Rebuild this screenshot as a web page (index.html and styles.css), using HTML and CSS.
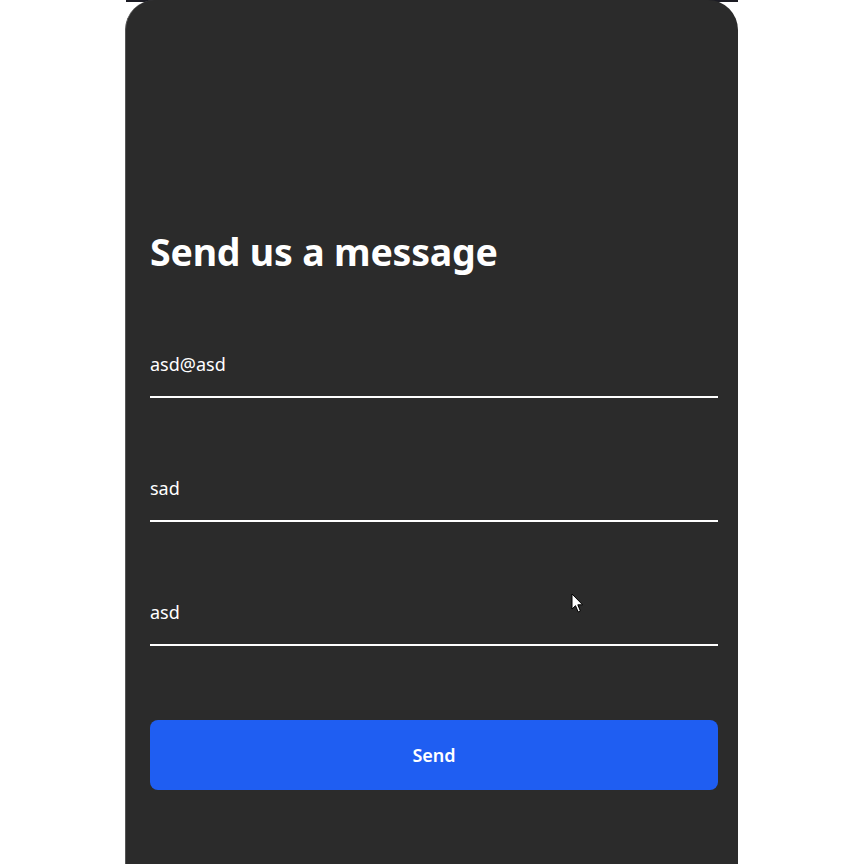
FILE: index.html
```html
<!DOCTYPE html>
<html lang="en">
<head>
<meta charset="utf-8">
<title>Contact</title>
<link rel="stylesheet" href="styles.css">
</head>
<body>
<div class="topbar"></div>
<main class="card">
  <h1 class="title">Send us a message</h1>
  <form class="form">
    <input class="field" type="email" value="asd@asd">
    <input class="field" type="text" value="sad">
    <input class="field" type="text" value="asd">
    <button class="send" type="button">Send</button>
  </form>
</main>
<svg class="cursor" width="14" height="22" viewBox="0 0 14 22">
  <path d="M1 1 L1 16 L4.5 12.7 L7.2 19 L9.4 18 L6.8 11.8 L11.6 11.8 Z" fill="#fff" stroke="#000" stroke-width="1"/>
</svg>
</body>
</html>
```
FILE: styles.css
```css
* { box-sizing: border-box; }
html, body { margin: 0; padding: 0; }
body {
  background: #ffffff;
  font-family: "Noto Sans", "Open Sans", sans-serif;
  height: 864px;
  overflow: hidden;
  position: relative;
}
.topbar {
  position: absolute;
  top: 0;
  left: 126px;
  width: 612px;
  height: 2px;
  background: #1c1c24;
}
.card {
  position: relative;
  width: 613px;
  height: 864px;
  margin-left: 125px;
  background: #2b2b2b;
  border-radius: 30px 30px 0 0;
  border-left: 1px solid #555;
  padding: 230px 20px 0 24px;
}
.title {
  margin: 0;
  color: #ffffff;
  font-size: 37.5px;
  line-height: 44px;
  font-weight: 700;
  letter-spacing: -0.2px;
}
.form {
  display: flex;
  flex-direction: column;
  margin-top: 76px;
}
.field {
  display: block;
  width: 100%;
  background: transparent;
  border: none;
  border-bottom: 2px solid #ffffff;
  color: #ffffff;
  font-family: inherit;
  font-size: 18px;
  line-height: 24px;
  padding: 2px 0 20px 0;
  margin: 0 0 76px 0;
  outline: none;
}
.field:last-of-type { margin-bottom: 74px; }
.send {
  height: 70px;
  width: 100%;
  border: none;
  border-radius: 8px;
  background: #1f5ef2;
  color: #ffffff;
  font-family: inherit;
  font-size: 18px;
  font-weight: 600;
}
.cursor {
  position: absolute;
  left: 571px;
  top: 593px;
}
```
